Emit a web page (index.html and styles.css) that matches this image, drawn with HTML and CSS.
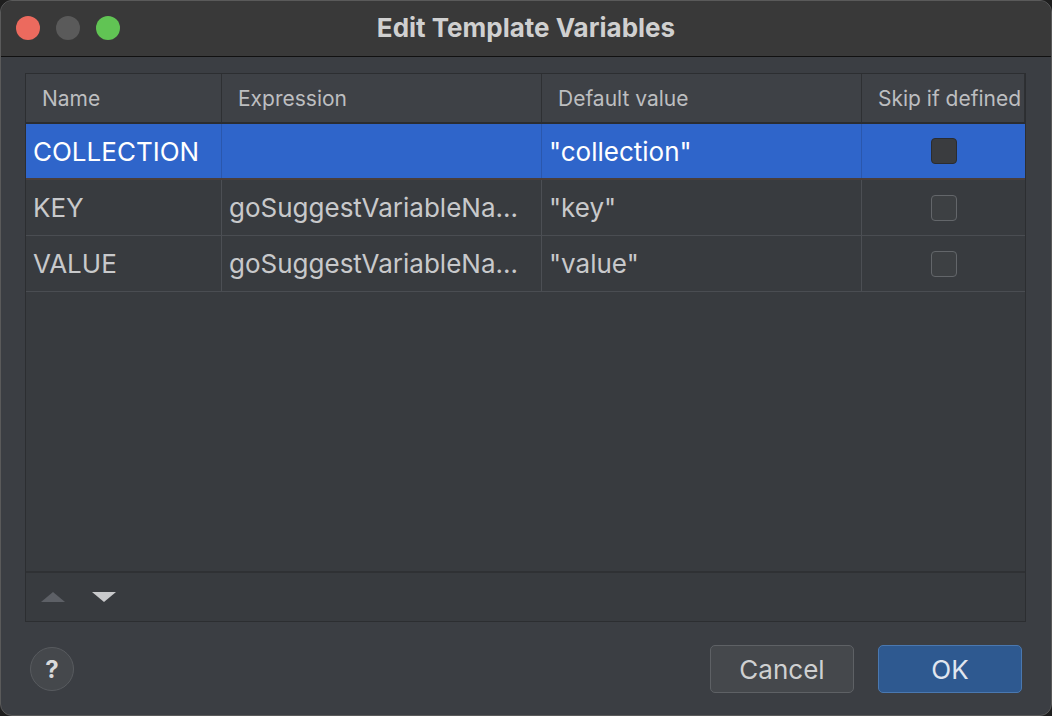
FILE: index.html
```html
<!DOCTYPE html>
<html>
<head>
<meta charset="utf-8">
<link rel="stylesheet" href="styles.css">
</head>
<body>
<div class="window">
  <div class="titlebar">
    <div class="lights">
      <span class="light red"></span>
      <span class="light gray"></span>
      <span class="light green"></span>
    </div>
    <div class="title">Edit Template Variables</div>
  </div>
  <div class="content">
    <div class="table">
      <div class="row head">
        <div class="cell">Name</div>
        <div class="cell">Expression</div>
        <div class="cell">Default value</div>
        <div class="cell">Skip if defined</div>
      </div>
      <div class="row selected">
        <div class="cell">COLLECTION</div>
        <div class="cell"></div>
        <div class="cell">"collection"</div>
        <div class="cell center"><span class="check"></span></div>
      </div>
      <div class="row">
        <div class="cell">KEY</div>
        <div class="cell">goSuggestVariableNa...</div>
        <div class="cell">"key"</div>
        <div class="cell center"><span class="check"></span></div>
      </div>
      <div class="row">
        <div class="cell">VALUE</div>
        <div class="cell">goSuggestVariableNa...</div>
        <div class="cell">"value"</div>
        <div class="cell center"><span class="check"></span></div>
      </div>
      <div class="filler"></div>
      <div class="toolbar">
        <svg class="arrow" width="26" height="14" viewBox="0 0 26 14"><polygon points="13,2 25,12 1,12" fill="#5d6066"/></svg>
        <svg class="arrow" width="26" height="14" viewBox="0 0 26 14"><polygon points="1,2 25,2 13,12" fill="#c9cacc"/></svg>
      </div>
    </div>
    <div class="footer">
      <div class="help">?</div>
      <div class="buttons">
        <div class="btn cancel">Cancel</div>
        <div class="btn ok">OK</div>
      </div>
    </div>
  </div>
</div>
</body>
</html>
```

FILE: styles.css
```css
html, body {
  margin: 0;
  padding: 0;
  background: #1e1e1e;
}
body {
  width: 1052px;
  height: 716px;
  font-family: Inter, "Liberation Sans", sans-serif;
  overflow: hidden;
}
.window {
  width: 1052px;
  height: 716px;
  box-sizing: border-box;
  border-radius: 12px;
  border: 1px solid #5a5a5a;
  background: #3b3e43;
  overflow: hidden;
  display: flex;
  flex-direction: column;
}
.titlebar {
  height: 55px;
  flex: none;
  background: #393939;
  border-bottom: 1px solid #111;
  position: relative;
  display: flex;
  align-items: center;
  justify-content: center;
}
.lights {
  position: absolute;
  left: 15px;
  top: 15px;
  display: flex;
  gap: 16px;
}
.light {
  width: 24px;
  height: 24px;
  border-radius: 50%;
  display: block;
}
.red { background: #ec6a5e; }
.gray { background: #5a5a5a; }
.green { background: #61c454; }
.title {
  color: #d0d0d0;
  font-size: 26px;
  font-weight: 700;
  margin-top: -2px;
}
.content {
  flex: 1;
  display: flex;
  flex-direction: column;
  padding: 16px 25px 0 24px;
}
.table {
  height: 547px;
  border: 1px solid #2c2e31;
  background: #383b3f;
  display: flex;
  flex-direction: column;
}
.row {
  display: grid;
  grid-template-columns: 196px 320px 320px 1fr;
  height: 56px;
  border-bottom: 1px solid #4a4d52;
  box-sizing: border-box;
}
.row.head {
  height: 50px;
  background: #3e4146;
  border-bottom: 2px solid #2b2d30;
}
.cell {
  border-right: 1px solid #4c4f54;
  display: flex;
  align-items: center;
  padding-left: 7px;
  font-size: 26px;
  color: #c8c9cb;
  white-space: nowrap;
  overflow: hidden;
}
.cell:last-child { border-right: none; }
.head .cell {
  font-size: 21px;
  color: #bdbec0;
  padding-left: 16px;
  border-right: 1px solid #2e3033;
}
.selected {
  background: #2f65ca;
  border-bottom: 2px solid #4a3e3a;
}
.selected .cell {
  color: #ffffff;
  border-right-color: #2a57ad;
}
.center {
  justify-content: center;
  padding-left: 0;
}
.check {
  width: 26px;
  height: 26px;
  box-sizing: border-box;
  border: 1px solid #63666a;
  border-radius: 4px;
  background: #3d4043;
  display: block;
}
.selected .check {
  background: #3a3c3f;
  border-color: #2a2c30;
}
.filler { flex: 1; }
.toolbar {
  height: 48px;
  border-top: 2px solid #2f3134;
  display: flex;
  align-items: center;
  gap: 25px;
  padding-left: 14px;
}
.footer {
  height: 94px;
  display: flex;
  align-items: center;
  justify-content: space-between;
  padding-left: 5px;
}
.help {
  width: 44px;
  height: 44px;
  border-radius: 50%;
  box-sizing: border-box;
  border: 1px solid #585b5f;
  background: #45484c;
  color: #d8d9da;
  font-size: 24px;
  font-weight: 700;
  display: flex;
  align-items: center;
  justify-content: center;
}
.buttons {
  display: flex;
  gap: 24px;
  padding-right: 4px;
}
.btn {
  width: 144px;
  height: 48px;
  box-sizing: border-box;
  border-radius: 5px;
  display: flex;
  align-items: center;
  justify-content: center;
  font-size: 26px;
}
.cancel {
  background: #45484c;
  border: 1px solid #5e6165;
  color: #cfd0d1;
}
.ok {
  background: #2e5990;
  border: 1px solid #4a78b0;
  color: #e0e6ef;
}
```
